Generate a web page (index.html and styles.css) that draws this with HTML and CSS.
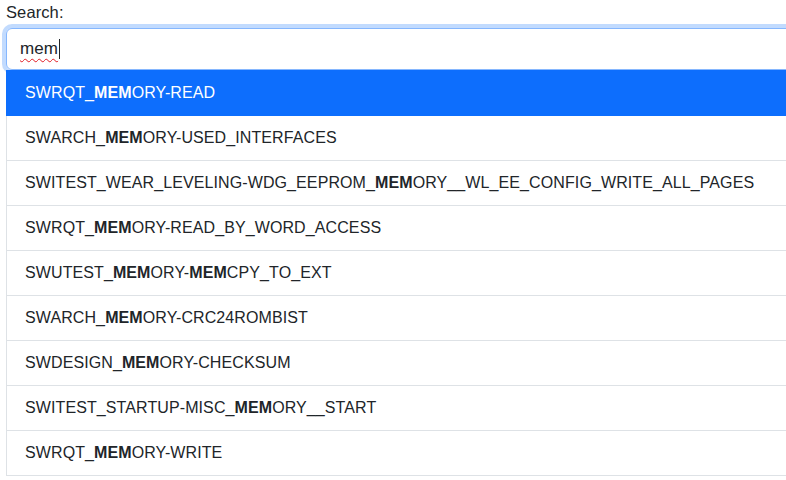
FILE: index.html
```html
<!DOCTYPE html>
<html>
<head>
<meta charset="utf-8">
<link rel="stylesheet" href="styles.css">
</head>
<body>
<div class="page">
  <div class="search">
    <label class="search-label">Search:</label>
    <div class="search-input"><span class="typed">mem</span><span class="caret"></span></div>
    <ul class="results">
      <li class="result active">SWRQT_<b>MEM</b>ORY-READ</li>
      <li class="result">SWARCH_<b>MEM</b>ORY-USED_INTERFACES</li>
      <li class="result">SWITEST_WEAR_LEVELING-WDG_EEPROM_<b>MEM</b>ORY__WL_EE_CONFIG_WRITE_ALL_PAGES</li>
      <li class="result">SWRQT_<b>MEM</b>ORY-READ_BY_WORD_ACCESS</li>
      <li class="result">SWUTEST_<b>MEM</b>ORY-<b>MEM</b>CPY_TO_EXT</li>
      <li class="result">SWARCH_<b>MEM</b>ORY-CRC24ROMBIST</li>
      <li class="result">SWDESIGN_<b>MEM</b>ORY-CHECKSUM</li>
      <li class="result">SWITEST_STARTUP-MISC_<b>MEM</b>ORY__START</li>
      <li class="result">SWRQT_<b>MEM</b>ORY-WRITE</li>
    </ul>
  </div>
</div>
</body>
</html>
```
FILE: styles.css
```css
body {
  margin: 0;
  padding: 0;
  background: #fff;
  font-family: "Liberation Sans", Arial, sans-serif;
  font-size: 16px;
  line-height: 24px;
  color: #212529;
  letter-spacing: 0.1px;
}
.page {
  width: 786px;
  height: 480px;
  overflow: hidden;
  padding-left: 6px;
  box-sizing: border-box;
}
.search {
  width: 1000px;
  display: flex;
  flex-direction: column;
}
.search-label {
  display: block;
  height: 24px;
  margin-bottom: 4px;
  font-size: 16.5px;
}
.search-input {
  height: 40px;
  border: 1px solid #86b7fe;
  border-radius: 6px;
  box-shadow: 0 0 0 4px rgba(13, 110, 253, 0.25);
  padding: 0 13px;
  display: flex;
  align-items: center;
  font-size: 17px;
}
.typed {
  text-decoration: underline wavy #e01b24;
  text-decoration-thickness: 1.3px;
  text-underline-offset: 4px;
}
.caret {
  width: 1px;
  height: 20px;
  background: #212529;
  margin-left: 1px;
}
.results {
  margin: 0;
  padding: 0;
  list-style: none;
  background: #fff;
}
.result {
  padding: 10px 18px;
  border-left: 1px solid #dee2e6;
  border-bottom: 1px solid #dee2e6;
  white-space: nowrap;
}
.result b {
  font-weight: 700;
}
.result.active {
  padding-top: 11px;
  background: #0d6efd;
  border-color: #0d6efd;
  color: #fff;
}
```
